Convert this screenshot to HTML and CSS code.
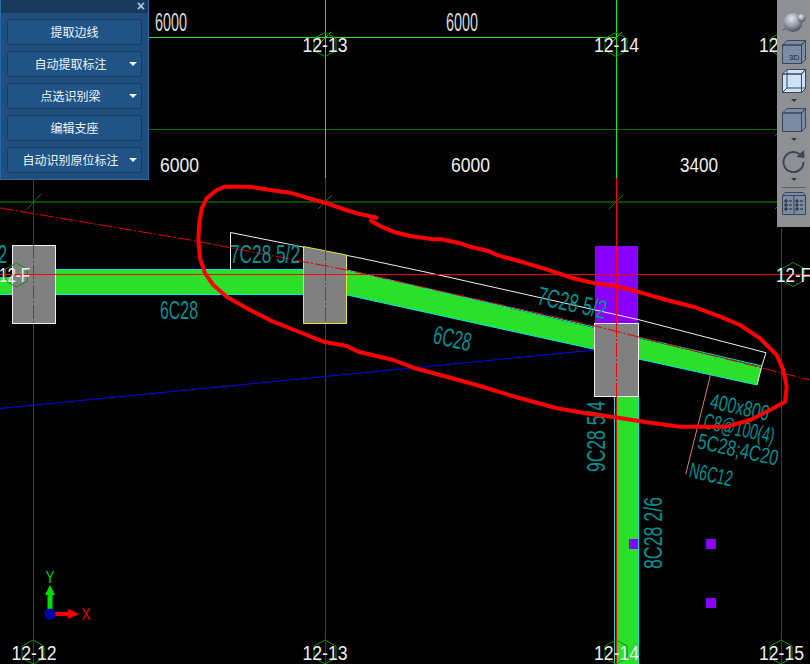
FILE: index.html
```html
<!DOCTYPE html>
<html lang="zh">
<head>
<meta charset="utf-8">
<title>CAD</title>
<link rel="stylesheet" href="styles.css">
</head>
<body>
<main class="viewport">
  <svg class="canvas" width="810" height="664" viewBox="0 0 810 664">
    <!-- grid lines -->
    <line class="g-bright" x1="149" y1="37.5" x2="616" y2="37.5"/>
    <line class="g-mid" x1="149" y1="129.5" x2="777" y2="129.5"/>
    <line class="g-dark" x1="0" y1="202" x2="777" y2="202"/>
    <line class="g-bright" x1="325.5" y1="0" x2="325.5" y2="178"/>
    <line class="g-pure" x1="616.5" y1="0" x2="616.5" y2="178"/>
    <line class="r-dark" x1="33.5" y1="180" x2="33.5" y2="664"/>
    <line class="r-dark" x1="325.5" y1="178" x2="325.5" y2="664"/>
    <line class="g-mid" x1="781.5" y1="228" x2="781.5" y2="274"/>
    <line class="r-dark" x1="781.5" y1="274" x2="781.5" y2="664"/>
    <!-- ticks -->
    <path class="tick" d="M27 209L41 194M318 209L332 195M609 209L623 195M775 209L789 195M775 136L789 122"/>
    <path class="tick-bright" d="M320 43L331 32M611 43L622 32"/>
    <!-- blue line -->
    <line class="blue" x1="0" y1="408.4" x2="595" y2="350"/>
    <!-- beams -->
    <rect class="beam" x="12" y="269" width="292" height="26"/>
    <rect class="beam" x="0" y="277" width="12" height="18"/>
    <line class="cyan" x1="12" y1="269.5" x2="304" y2="269.5"/>
    <line class="cyan" x1="0" y1="294.5" x2="304" y2="294.5"/>
    <polygon class="beam" points="347,270 762,367 757,385 347,295"/>
    <line class="cyan" x1="347" y1="270" x2="762" y2="366"/>
    <line class="cyan" x1="347" y1="295" x2="757" y2="385"/>
    <rect class="beam" x="617" y="396" width="21" height="268"/>
    <line class="cyan" x1="614.5" y1="396" x2="614.5" y2="664"/>
    <line class="cyan" x1="638.5" y1="396" x2="638.5" y2="664"/>
    <line class="r-pure" x1="616.5" y1="178" x2="616.5" y2="245"/>
    <!-- columns -->
    <rect class="col-white" x="12.5" y="245.5" width="43" height="78"/>
    <polygon class="col-yellow" points="303.5,246.5 346.5,255 346.5,323.5 303.5,323.5"/>
    <rect class="purple" x="595" y="246" width="43" height="77"/>
    <rect class="col-white" x="594.5" y="323.5" width="44" height="73"/>
    <!-- beam reference line -->
    <polyline class="white-line" points="230.5,270 230.5,232.5 303,247"/>
    <polyline class="white-line" points="347,255.5 360,258 430,273 640,320 766,352.7 761.5,367 757,385"/>
    <!-- axis lines over members -->
    <line class="r-dash" x1="33.5" y1="245" x2="33.5" y2="323"/>
    <line class="r-dash" x1="325.5" y1="247" x2="325.5" y2="323"/>
    <line class="r-pure" x1="616.5" y1="245" x2="616.5" y2="323"/>
    <line class="r-pure-dash" x1="616.5" y1="323" x2="616.5" y2="396"/>
    <line class="r-pure" x1="616.5" y1="396" x2="616.5" y2="664"/>
    <line class="r-pure" x1="0" y1="274.5" x2="810" y2="274.5"/>
    <polyline class="r-center" points="0,208 190,240 347,270 595,326 810,380"/>
    <line class="leader" x1="710.7" y1="374.3" x2="685.7" y2="474.3"/>
    <!-- purple markers -->
    <rect class="purple" x="629" y="539" width="9" height="10"/>
    <rect class="purple" x="706" y="539" width="10" height="10"/>
    <rect class="purple" x="706" y="598" width="10" height="10"/>
    <!-- annotations -->
    <text class="teal" x="-2" y="263" textLength="9" lengthAdjust="spacingAndGlyphs">2</text>
    <text class="teal" x="230" y="263" textLength="70" lengthAdjust="spacingAndGlyphs">7C28 5/2</text>
    <text class="teal" x="160" y="319" textLength="38" lengthAdjust="spacingAndGlyphs">6C28</text>
    <text class="teal" x="432" y="343" textLength="38" lengthAdjust="spacingAndGlyphs" transform="rotate(12.5 432 343)">6C28</text>
    <text class="teal" x="536" y="304" textLength="70" lengthAdjust="spacingAndGlyphs" transform="rotate(12.5 536 304)">7C28 5/2</text>
    <text class="teal" x="605" y="472" textLength="71" lengthAdjust="spacingAndGlyphs" transform="rotate(-90 605 472)">9C28 5/4</text>
    <text class="teal" x="662" y="569" textLength="72" lengthAdjust="spacingAndGlyphs" transform="rotate(-90 662 569)">8C28 2/6</text>
    <text class="teal small" x="709" y="408" textLength="60" lengthAdjust="spacingAndGlyphs" transform="rotate(12.5 709 408)">400x800</text>
    <text class="teal small" x="702.5" y="428" textLength="72" lengthAdjust="spacingAndGlyphs" transform="rotate(12.5 702.5 428)">C8@100(4)</text>
    <text class="teal small" x="696.5" y="448" textLength="82" lengthAdjust="spacingAndGlyphs" transform="rotate(12.5 696.5 448)">5C28;4C20</text>
    <text class="teal small" x="688" y="477" textLength="44" lengthAdjust="spacingAndGlyphs" transform="rotate(12.5 688 477)">N6C12</text>
    <!-- dimensions -->
    <text class="dim-thin" x="155" y="31" textLength="32" lengthAdjust="spacingAndGlyphs">6000</text>
    <text class="dim-thin" x="446" y="31" textLength="32" lengthAdjust="spacingAndGlyphs">6000</text>
    <text class="dim" x="160" y="172" textLength="39" lengthAdjust="spacingAndGlyphs">6000</text>
    <text class="dim" x="451" y="172" textLength="39" lengthAdjust="spacingAndGlyphs">6000</text>
    <text class="dim" x="680" y="172" textLength="38" lengthAdjust="spacingAndGlyphs">3400</text>
    <!-- axis bubbles -->
    <polygon class="hex" points="325,32.5 336,38.5 336,50.5 325,56.5 314,50.5 314,38.5"/>
    <polygon class="hex" points="616,32.5 627,38.5 627,50.5 616,56.5 605,50.5 605,38.5"/>
    <polygon class="hex" points="781,32.5 792,38.5 792,50.5 781,56.5 770,50.5 770,38.5"/>
    <polygon class="hex" points="33,640 44,646 44,658 33,664 22,658 22,646"/>
    <polygon class="hex" points="325,640 336,646 336,658 325,664 314,658 314,646"/>
    <polygon class="hex" points="616,640 627,646 627,658 616,664 605,658 605,646"/>
    <polygon class="hex" points="781,640 792,646 792,658 781,664 770,658 770,646"/>
    <polygon class="hex" points="16.5,263 27,269 27.5,281 16.5,287 6,281 5.5,269"/>
    <polygon class="hex" points="793,262.5 804,268.5 804,280.5 793,286.5 782,280.5 782,268.5"/>
    <text class="dim" x="302.5" y="51.5" textLength="45" lengthAdjust="spacingAndGlyphs">12-13</text>
    <text class="dim" x="594" y="51.5" textLength="45" lengthAdjust="spacingAndGlyphs">12-14</text>
    <text class="dim" x="759" y="51.5" textLength="45" lengthAdjust="spacingAndGlyphs">12-15</text>
    <text class="dim" x="11.5" y="659.5" textLength="45" lengthAdjust="spacingAndGlyphs">12-12</text>
    <text class="dim" x="302.5" y="659.5" textLength="45" lengthAdjust="spacingAndGlyphs">12-13</text>
    <text class="dim" x="594" y="659.5" textLength="45" lengthAdjust="spacingAndGlyphs">12-14</text>
    <text class="dim" x="759" y="659.5" textLength="45" lengthAdjust="spacingAndGlyphs">12-15</text>
    <text class="dim" x="-1" y="282" textLength="31" lengthAdjust="spacingAndGlyphs">12-F</text>
    <text class="dim" x="776" y="282" textLength="35" lengthAdjust="spacingAndGlyphs">12-F</text>
    <!-- hand drawn markup -->
    <polyline class="markup" points="376.5,217.7 356.7,213.3 340,208 325,202.7 303.3,196.7 290,192.7 270,190 250,186.7 225,186.7 216.7,190 206.7,198.3 201.7,208.3 199.3,223.3 198.3,240 200,258.3 205,273.3 213.3,285 226.7,296.7 250,310 273.3,321.7 296.7,331 323.3,341.7 346.7,346 358.3,351.7 393.3,360 413.3,367.7 446.7,376.7 480,386 516.7,397.3 556.7,408.3 590,414 615,417.3 646.7,422.3 680,426.7 726.7,426.7 750,420 770,410 785,401.7 786.7,386.7 783.3,370 776.7,355 760,338.3 740,325 720,316.7 693.3,306.7 666.7,300 640,292.3 616.7,286.3 593.3,283 573.3,278.3 546.7,269.3 523.3,262.3 496.7,255 488.3,251 470,246.7 460,243.3 441.7,239.3 433.3,239.3 410,236 393.3,231.7 380,226 371,220.7"/>
    <!-- coordinate gizmo -->
    <rect class="giz-g" x="47.5" y="594" width="5" height="20"/>
    <polygon class="giz-g" points="50,585 55,595 45,595"/>
    <rect class="giz-r" x="50" y="612" width="19" height="4"/>
    <polygon class="giz-r" points="79.5,614 68,609 68,619"/>
    <circle class="giz-b" cx="50" cy="614" r="5.5"/>
    <text class="giz-y" x="45.5" y="583" textLength="9" lengthAdjust="spacingAndGlyphs">Y</text>
    <text class="giz-x" x="81.5" y="620" textLength="9" lengthAdjust="spacingAndGlyphs">X</text>
  </svg>

  <aside class="panel">
    <header class="panel-title"><span class="panel-close">×</span></header>
    <div class="panel-body">
      <button class="btn">提取边线</button>
      <button class="btn has-caret">自动提取标注</button>
      <button class="btn has-caret">点选识别梁</button>
      <button class="btn">编辑支座</button>
      <button class="btn has-caret">自动识别原位标注</button>
    </div>
  </aside>

  <nav class="toolbar">
    <svg class="ti sphere" width="24" height="20" viewBox="0 0 24 20">
      <defs>
        <radialGradient id="ball" cx="0.42" cy="0.3" r="0.75">
          <stop offset="0" stop-color="#e4e7ec"/>
          <stop offset="0.5" stop-color="#98a0ac"/>
          <stop offset="1" stop-color="#414852"/>
        </radialGradient>
      </defs>
      <path d="M1 18Q4 17 18 6" class="ti-shadow"/>
      <circle cx="11" cy="10.5" r="9.5" fill="url(#ball)"/>
      <circle cx="19.5" cy="6" r="4" fill="url(#ball)"/>
    </svg>
    <svg class="ti cube-a" width="24" height="24" viewBox="0 0 24 24">
      <path class="ti-fill" d="M.5 5H19.5V23.5H.5ZM.5 5L5 .5H23.5L19.5 5ZM19.5 5L23.5 .5V19.5L19.5 23.5Z"/>
      <text class="ti-3d" x="7" y="20">3D</text>
    </svg>
    <svg class="ti cube-b" width="24" height="24" viewBox="0 0 24 24">
      <path class="ti-glass" d="M.5 5H19.5V23.5H.5ZM.5 5L5 .5H23.5L19.5 5ZM19.5 5L23.5 .5V19.5L19.5 23.5Z"/>
      <path class="ti-line" d="M5 .5V19H23.5M5 19L.5 23.5"/>
    </svg>
    <span class="caret-s gap-a"></span>
    <svg class="ti cube-c" width="24" height="24" viewBox="0 0 24 24">
      <path class="ti-fill" d="M.5 5H19.5V23.5H.5ZM.5 5L5 .5H23.5L19.5 5ZM19.5 5L23.5 .5V19.5L19.5 23.5Z"/>
    </svg>
    <span class="caret-s gap-a"></span>
    <svg class="ti rotate" width="24" height="24" viewBox="0 0 24 24">
      <path class="ti-rot" d="M18 5.5A10 10 0 1 0 21.5 13"/>
      <polygon class="ti-rot-head" points="22,1 22.5,9 14.5,8"/>
    </svg>
    <span class="caret-s gap-b"></span>
    <span class="sep"></span>
    <svg class="ti grid" width="24" height="23" viewBox="0 0 24 23">
      <path class="ti-fill" d="M.5 3.5L3 .5H21L23.5 3.5V22.5H.5Z"/>
      <path class="ti-line" d="M.5 3.5H23.5M12 3.5V22.5"/>
      <path class="ti-marks" d="M3 8h2v2H3ZM7 9h3M3 12h2v2H3ZM7 13h3M3 16h2v2H3ZM7 17h3M14 8h2v2h-2ZM18 9h3M14 12h2v2h-2ZM18 13h3M14 16h2v2h-2ZM18 17h3"/>
    </svg>
  </nav>
</main>
</body>
</html>
```

FILE: styles.css
```css
html, body {
  margin: 0;
  padding: 0;
  background: #000;
}

.viewport {
  position: relative;
  width: 810px;
  height: 664px;
  overflow: hidden;
  background: #000;
}

.canvas {
  position: absolute;
  inset: 0;
  display: block;
}

/* --- drawing layers --- */
.g-bright { stroke: #33dd22; stroke-width: 1; }
.g-pure { stroke: #11ee11; stroke-width: 1; }
.g-mid { stroke: #0a6a00; stroke-width: 1; }
.g-dark { stroke: #0a4a00; stroke-width: 2; }
.r-dark { stroke: #a51010; stroke-width: 1; }
.r-dash { stroke: #c02020; stroke-width: 1; stroke-dasharray: 14 2 2 2; }
.r-pure { stroke: #ff0000; stroke-width: 1; }
.r-pure-dash { stroke: #ff0000; stroke-width: 1; stroke-dasharray: 14 2 2 2; }
.r-center { fill: none; stroke: #e00000; stroke-width: 1; stroke-dasharray: 14 2 2 2; }
.tick { fill: none; stroke: #0a7a0a; stroke-width: 1; }
.tick-bright { fill: none; stroke: #22cc22; stroke-width: 1; }
.blue { stroke: #0000f0; stroke-width: 1; }
.leader { stroke: #d88080; stroke-width: 1; }
.beam { fill: #2be02b; }
.cyan { stroke: #00e8e8; stroke-width: 1; }
.purple { fill: #8800ff; }
.col-white { fill: #808080; stroke: #f0f0f0; stroke-width: 1; }
.col-yellow { fill: #808080; stroke: #e8e830; stroke-width: 1; }
.white-line { fill: none; stroke: #f0f0f0; stroke-width: 1; }
.hex { fill: none; stroke: #0b900b; stroke-width: 1; }
.markup {
  fill: none;
  stroke: #ff0000;
  stroke-width: 4;
  stroke-linejoin: round;
  stroke-linecap: round;
}

.teal {
  font-family: "Liberation Sans", sans-serif;
  font-size: 26px;
  fill: #009292;
}
.teal.small { font-size: 22px; }

.dim {
  font-family: "Liberation Sans", sans-serif;
  font-size: 20px;
  fill: #eeeeee;
}
.dim-thin {
  font-family: "Liberation Sans", sans-serif;
  font-size: 25px;
  fill: #d8d8d8;
}

.giz-g { fill: #00e000; }
.giz-r { fill: #f00000; }
.giz-b { fill: #0000b0; }
.giz-y, .giz-x {
  font-family: "Liberation Sans", sans-serif;
  font-size: 16px;
}
.giz-y { fill: #00d000; }
.giz-x { fill: #e80000; }

/* --- floating panel --- */
.panel {
  position: absolute;
  left: 0;
  top: 0;
  width: 149px;
  height: 180px;
  box-sizing: border-box;
  border: 1px solid #2a68a6;
  border-top: 0;
  background: #1f4d7c;
  display: flex;
  flex-direction: column;
}

.panel-title {
  height: 13px;
  background: #17395c;
  display: flex;
  align-items: center;
  justify-content: flex-end;
  padding-right: 3px;
}

.panel-close {
  font-family: "Liberation Sans", sans-serif;
  font-size: 14px;
  font-weight: 700;
  line-height: 13px;
  color: #a8c8e6;
}

.panel-body {
  display: flex;
  flex-direction: column;
  gap: 6px;
  padding: 6px 6px 0;
}

.btn {
  position: relative;
  width: 135px;
  height: 26px;
  box-sizing: border-box;
  padding: 0;
  border: 1px solid #173b60;
  border-radius: 3px;
  background: #215484;
  color: #eef4fa;
  font-family: "Noto Sans CJK SC", sans-serif;
  font-size: 12px;
  line-height: 24px;
  text-align: center;
}

.btn.has-caret { padding-right: 8px; }

.btn.has-caret::after {
  content: "";
  position: absolute;
  right: 4px;
  top: 10px;
  border-left: 4px solid transparent;
  border-right: 4px solid transparent;
  border-top: 4px solid #f0f4f8;
}

/* --- view toolbar --- */
.toolbar {
  position: absolute;
  right: 0;
  top: 0;
  width: 33px;
  height: 227px;
  box-sizing: border-box;
  padding-top: 12px;
  background: #8e9094;
  display: flex;
  flex-direction: column;
  align-items: center;
}

.ti { display: block; flex: none; }
.cube-a { margin-top: 8px; }
.cube-b { margin-top: 5px; }
.cube-c { margin-top: 6px; }
.rotate { margin-top: 8px; }
.grid { margin-top: 4px; }

.ti-shadow { fill: none; stroke: #4a4f58; stroke-width: 1; }
.ti-fill { fill: #7a8ba3; stroke: #3b4759; stroke-width: 1; stroke-linejoin: round; }
.ti-glass { fill: #cfe3f8; stroke: #3b4759; stroke-width: 1; stroke-linejoin: round; }
.ti-line { fill: none; stroke: #3b4759; stroke-width: 1; }
.ti-marks { fill: none; stroke: #20262f; stroke-width: 1; }
.ti-rot { fill: none; stroke: #3b4759; stroke-width: 2; }
.ti-rot-head { fill: #3b4759; }
.ti-3d {
  font-family: "Liberation Sans", sans-serif;
  font-size: 8px;
  fill: #20262f;
}

.caret-s {
  flex: none;
  width: 0;
  height: 0;
  border-left: 3px solid transparent;
  border-right: 3px solid transparent;
  border-top: 3px solid #33383f;
}
.gap-a { margin-top: 6px; }
.gap-b { margin-top: 5px; }

.sep {
  flex: none;
  width: 24px;
  height: 1px;
  margin-top: 6px;
  background: #5f6165;
}
```
